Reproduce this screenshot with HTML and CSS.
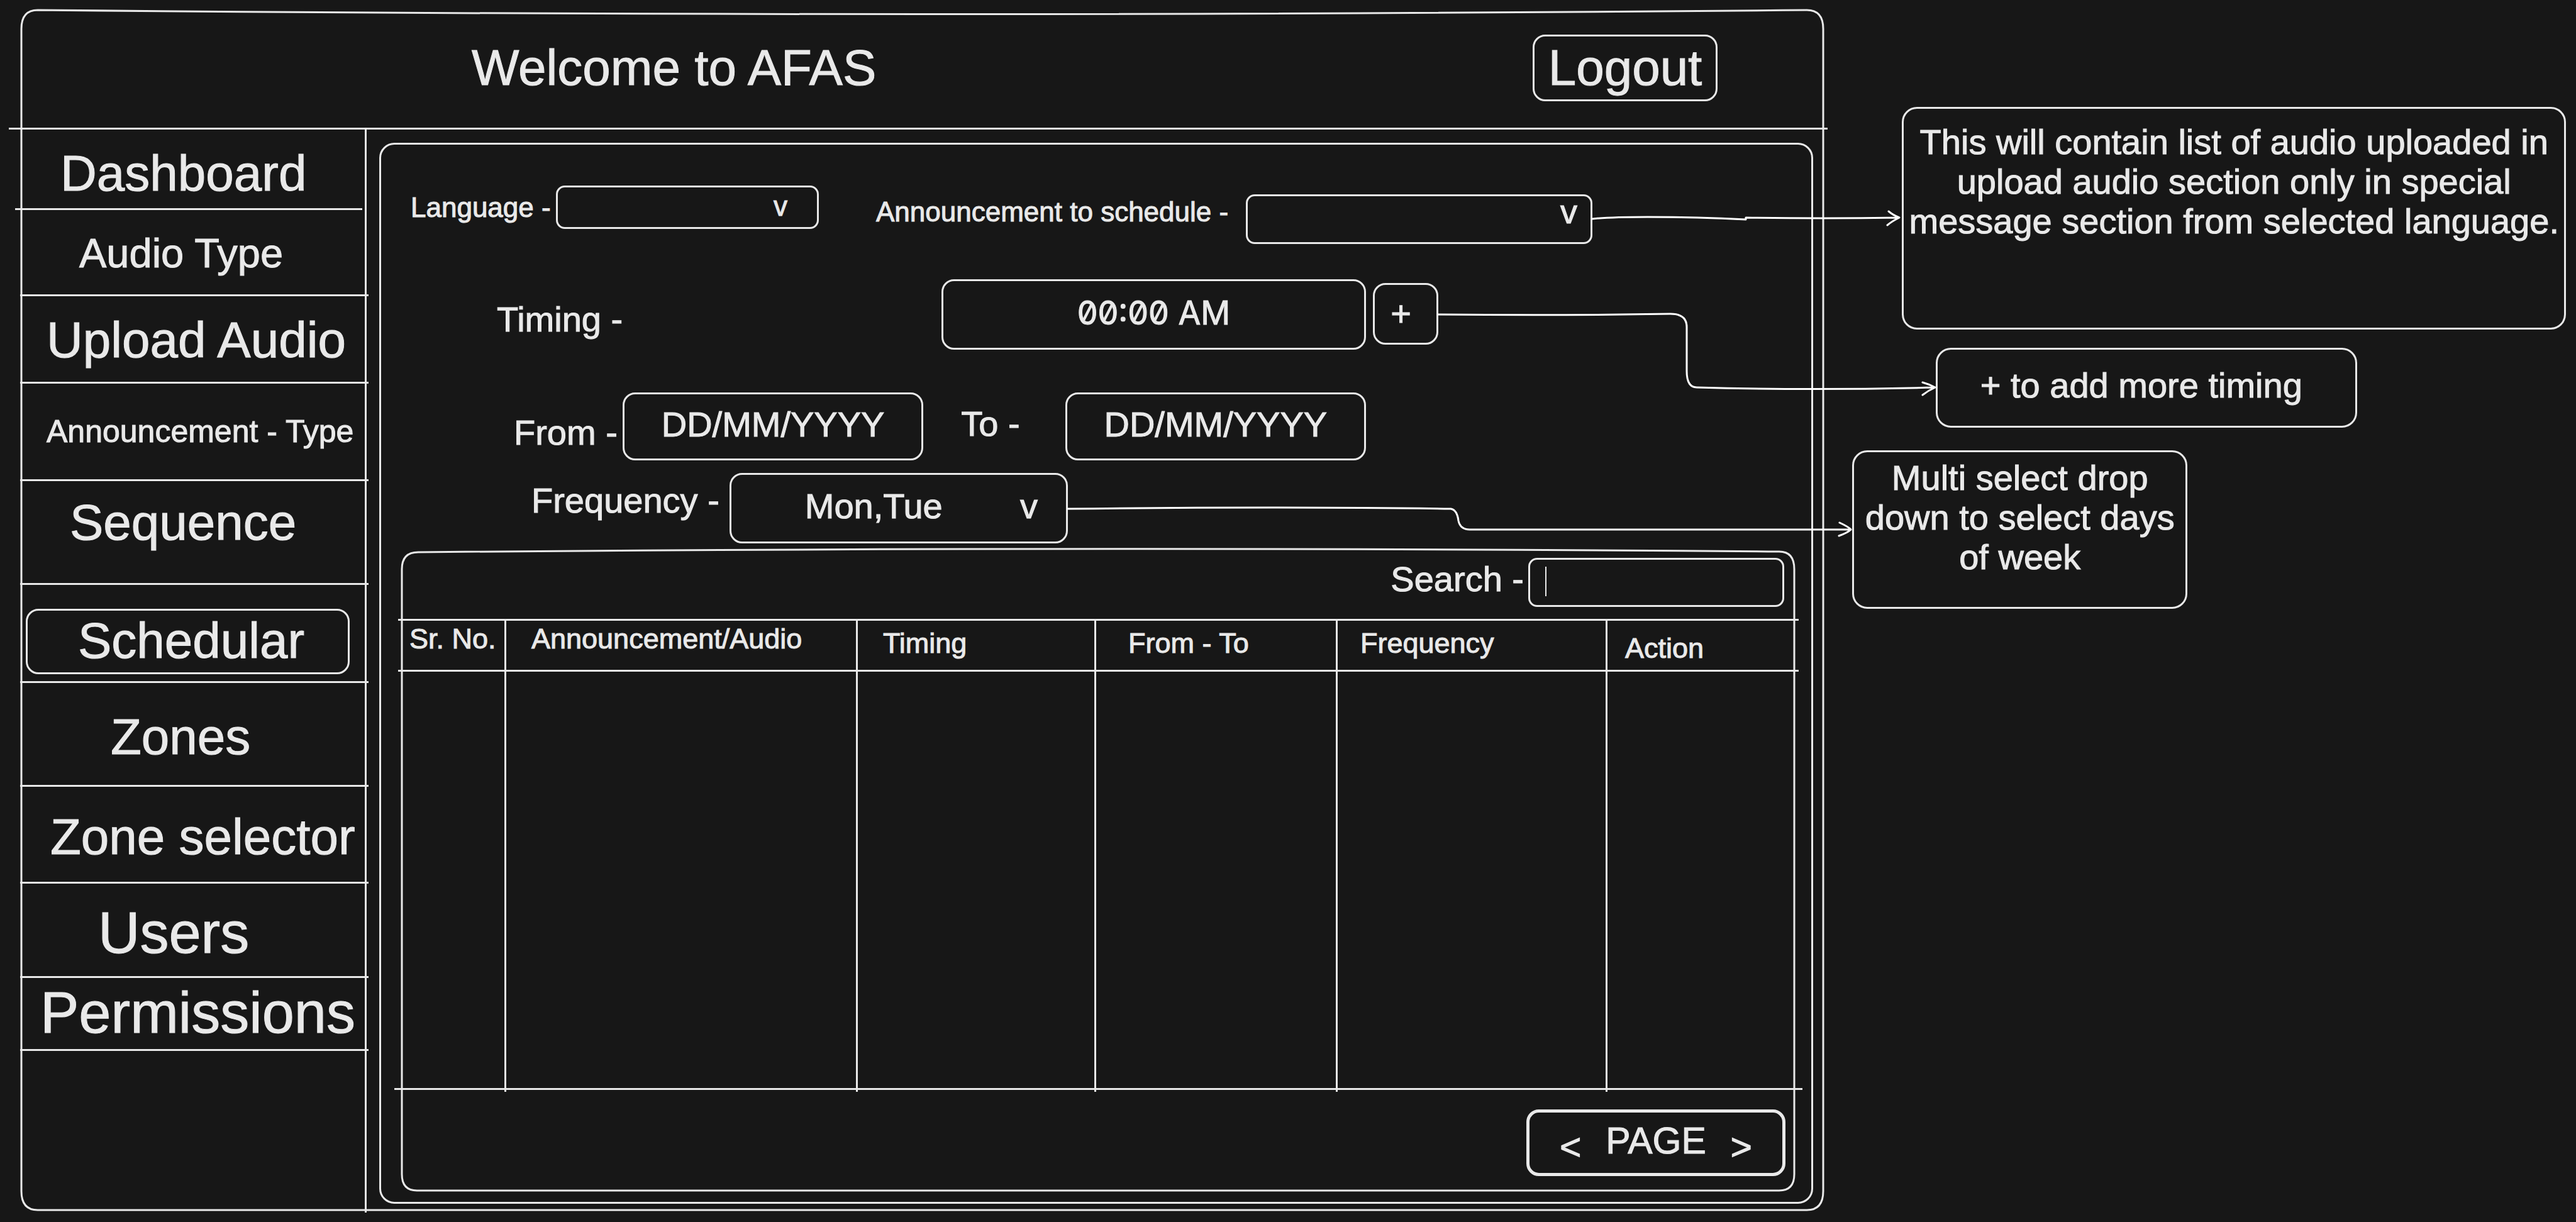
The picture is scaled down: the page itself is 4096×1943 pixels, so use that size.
FILE: index.html
```html
<!DOCTYPE html>
<html lang="en">
<head>
<meta charset="utf-8">
<meta name="viewport" content="width=device-width, initial-scale=1">
<title>AFAS - Schedular</title>
<link rel="stylesheet" href="styles.css">
</head>
<body>
<div class="board">
  <div class="app">
    <svg class="outline" viewBox="0 0 2869 1912" preserveAspectRatio="none" aria-hidden="true">
      <path d="M28 2 Q1434 15 2841 2 Q2867 2 2867 32 V1880 Q2867 1910 2841 1910 H28 Q2 1910 2 1880 V32 Q2 2 28 2 Z"/>
    </svg>
    <header class="topbar">
      <h1 class="title">Welcome to AFAS</h1>
      <button class="logout" type="button">Logout</button>
    </header>
    <div class="body">
      <nav class="sidebar" aria-label="Sections">
        <ul class="menu">
          <li class="item dashboard"><a href="#dashboard">Dashboard</a></li>
          <li class="item audio-type"><a href="#audio-type">Audio Type</a></li>
          <li class="item upload"><a href="#upload">Upload Audio</a></li>
          <li class="item announcement"><a href="#announcement">Announcement - Type</a></li>
          <li class="item sequence"><a href="#sequence">Sequence</a></li>
          <li class="item schedular"><a href="#schedular" aria-current="page">Schedular</a></li>
          <li class="item zones"><a href="#zones">Zones</a></li>
          <li class="item zone-selector"><a href="#zone-selector">Zone selector</a></li>
          <li class="item users"><a href="#users">Users</a></li>
          <li class="item permissions"><a href="#permissions">Permissions</a></li>
        </ul>
      </nav>
      <main class="panel">
        <form class="form">
          <div class="row row-source">
            <div class="field">
              <label class="small" for="language">Language -</label>
              <div class="select select-language"><select id="language"><option></option></select><span class="chevron" aria-hidden="true">v</span></div>
            </div>
            <div class="field field-announcement">
              <label class="small" for="audio">Announcement to schedule -</label>
              <div class="select select-audio"><select id="audio"><option></option></select><span class="chevron" aria-hidden="true">v</span></div>
            </div>
          </div>
          <div class="row row-timing">
            <label class="low" for="time">Timing -</label>
            <input class="box time" id="time" type="text" value="00:00 AM">
            <button class="box add" type="button" aria-label="Add timing">+</button>
          </div>
          <div class="row row-dates">
            <label class="low" for="from">From -</label>
            <input class="box date" id="from" type="text" placeholder="DD/MM/YYYY">
            <label class="to" for="to">To -</label>
            <input class="box date" id="to" type="text" placeholder="DD/MM/YYYY">
          </div>
          <div class="row row-frequency">
            <label class="high" for="frequency">Frequency -</label>
            <div class="select select-frequency"><select id="frequency"><option>Mon,Tue</option></select><span class="chevron" aria-hidden="true">v</span></div>
          </div>
        </form>
        <section class="records">
          <svg class="outline" viewBox="0 0 2218 1024" preserveAspectRatio="none" aria-hidden="true">
            <path d="M28 7 Q1109 -3 2192 6 Q2216 6 2216 34 V996 Q2216 1022 2192 1022 H26 Q2 1022 2 996 V34 Q2 7 28 7 Z"/>
          </svg>
          <div class="search">
            <label for="search">Search -</label>
            <div class="search-box"><span class="caret"></span><input id="search" type="text"></div>
          </div>
          <table class="table">
            <colgroup><col class="c-no"><col class="c-name"><col class="c-timing"><col class="c-range"><col class="c-frequency"><col class="c-action"></colgroup>
            <thead>
              <tr><th class="h-no">Sr. No.</th><th class="h-name">Announcement/Audio</th><th class="h-timing">Timing</th><th class="h-range">From - To</th><th class="h-frequency">Frequency</th><th class="h-action">Action</th></tr>
            </thead>
            <tbody>
              <tr><td></td><td></td><td></td><td></td><td></td><td></td></tr>
            </tbody>
          </table>
          <footer class="table-foot">
            <div class="pager">
              <button type="button" aria-label="Previous page">&lt;</button>
              <span>PAGE</span>
              <button type="button" aria-label="Next page">&gt;</button>
            </div>
          </footer>
        </section>
      </main>
    </div>
  </div>
  <aside class="notes">
    <p class="note note-audio">This will contain list of audio uploaded in<br>upload audio section only in special<br>message section from selected language.</p>
    <p class="note note-timing">+ to add more timing</p>
    <p class="note note-days">Multi select drop<br>down to select days<br>of week</p>
  </aside>
  <svg class="connectors" viewBox="0 0 4096 1943" aria-hidden="true">
    <path d="M2532 348 Q2560 345 2620 345 Q2700 345 2776 349 V346 Q2900 348 3020 346 M3003 336 Q3010 342 3020 346 Q3008 352 3001 358"/>
    <path d="M2287 500 Q2480 502 2656 499 Q2682 499 2682 520 V590 Q2682 616 2698 616 Q2880 621 3077 616 M3057 608 Q3068 611 3077 616 Q3066 621 3057 628"/>
    <path d="M1698 809 Q2040 805 2307 809 Q2317 811 2319 828 Q2322 842 2337 842 H2943 M2925 831 Q2940 838 2943 842 Q2938 847 2924 852"/>
  </svg>
</div>
</body>
</html>
```
FILE: styles.css
```css
:root {
  --ink: #e9e9e9;
  --paper: #171717;
  --line: 3px solid var(--ink);
}

* { box-sizing: border-box; }

body {
  margin: 0;
  background: var(--paper);
  color: var(--ink);
  font-family: "Liberation Sans", Arial, sans-serif;
  font-size: 56px;
  line-height: 64px;
  -webkit-text-stroke: 1px currentColor;
}

h1, p, ul { margin: 0; padding: 0; }

a { color: inherit; text-decoration: none; }

button, input, select {
  margin: 0;
  padding: 0;
  border: 0;
  background: transparent;
  color: inherit;
  font: inherit;
  -webkit-text-stroke: inherit;
  outline: 0;
  appearance: none;
  border-radius: 0;
  min-width: 0;
}

input::placeholder { color: inherit; opacity: 1; }

label { white-space: nowrap; }

.board {
  position: relative;
  display: grid;
  grid-template-columns: minmax(0, 2869fr) minmax(0, 1135fr);
  column-gap: 44px;
  align-items: start;
  padding: 14px 16px 16px 32px;
}

.outline {
  position: absolute;
  inset: 0;
  width: 100%;
  height: 100%;
  pointer-events: none;
}

.outline path {
  fill: none;
  stroke: var(--ink);
  stroke-width: 3px;
  vector-effect: non-scaling-stroke;
}

.connectors {
  position: absolute;
  top: 0;
  left: 0;
  width: 100%;
  pointer-events: none;
}

.connectors path {
  fill: none;
  stroke: #fff;
  stroke-width: 3px;
  stroke-linecap: round;
  stroke-linejoin: round;
}

.app { position: relative; }

/* Header */
.topbar {
  display: flex;
  align-items: center;
  justify-content: space-between;
  height: 192px;
  margin: 0 -5px 0 -18px;
  padding: 0 175px 2px 736px;
  border-bottom: var(--line);
}

.title {
  font-size: 80px;
  font-weight: 400;
  line-height: 80px;
}

.logout {
  width: 294px;
  height: 106px;
  border: var(--line);
  border-radius: 20px;
  font-size: 80px;
  line-height: 80px;
}

.body {
  display: grid;
  grid-template-columns: 551px minmax(0, 1fr);
}

/* Sidebar */
.sidebar {
  margin-bottom: -2px;
  border-right: var(--line);
}

.menu { list-style: none; }

.item {
  margin-right: -6px;
  border-bottom: var(--line);
  font-size: 80px;
  line-height: 80px;
  white-space: nowrap;
}

.item a { display: block; }

.dashboard { height: 128px; margin: 0 4px 0 -8px; padding: 30px 0 0 72px; }
.audio-type { height: 137px; padding: 29px 0 0 94px; font-size: 65px; }
.upload { height: 139px; padding: 30px 0 0 42px; }
.announcement { height: 155px; padding: 36px 0 0 42px; font-size: 50px; }
.sequence { height: 165px; padding: 26px 0 0 79px; }
.schedular { height: 156px; padding: 38px 30px 0 9px; }
.zones { height: 165px; padding: 46px 0 0 144px; }
.zone-selector { height: 154px; padding: 40px 0 0 48px; }
.users { height: 150px; padding: 38px 0 0 124px; font-size: 92px; }
.permissions { height: 116px; padding: 15px 0 0 32px; font-size: 92px; }

.schedular a {
  height: 104px;
  padding: 8px 0 0 80px;
  border: var(--line);
  border-radius: 20px;
}

/* Content panel */
.panel {
  margin: 21px 18px 12px 20px;
  border: var(--line);
  border-radius: 24px;
}

.form { padding-top: 65px; }

.row {
  display: flex;
  align-items: flex-start;
}

.row-source {
  display: grid;
  grid-template-columns: minmax(0, 649fr) minmax(0, 1139fr);
  column-gap: 91px;
  padding: 0 348px 0 47px;
}

.row-timing { margin-top: 56px; padding: 0 593px 0 184px; }
.row-dates { margin-top: 68px; padding: 0 708px 0 211px; }
.row-frequency { margin-top: 20px; padding: 0 1182px 0 239px; }

.field {
  display: flex;
  align-items: center;
  gap: 8px;
}

.field-announcement {
  align-items: flex-start;
  gap: 28px;
  margin-top: 14px;
}

.small { font-size: 44px; line-height: 56px; }
.low { padding-top: 32px; }
.high { padding-top: 12px; }

.box {
  border: var(--line);
  border-radius: 20px;
  text-align: center;
}

.select {
  display: flex;
  flex: 1;
  border: var(--line);
  border-radius: 14px;
}

.select select { flex: 1; height: 100%; }

.select-language { height: 69px; padding-right: 47px; font-size: 44px; line-height: 60px; }
.select-audio { height: 79px; padding-right: 21px; font-size: 54px; line-height: 48px; }

.select-frequency {
  height: 112px;
  margin-left: 16px;
  padding: 0 45px 8px 117px;
  border-radius: 20px;
  line-height: 100px;
}

.time {
  flex: 1;
  height: 112px;
  padding-bottom: 6px;
  font-family: Inter, sans-serif;
  font-size: 52px;
  font-feature-settings: "zero";
}

.row-timing .low { flex: 0 0 707px; }

.add { width: 104px; height: 98px; margin: 6px 0 0 11px; padding-right: 15px; }

.date { flex: 1; height: 108px; padding-bottom: 8px; }
.row-dates .low { margin-right: 8px; }
.to { margin: 0 72px 0 60px; padding-top: 18px; }

/* Records */
.records {
  position: relative;
  margin: 7px 25px 16px 31px;
}

.search {
  display: flex;
  justify-content: flex-end;
  gap: 7px;
  height: 113px;
  padding: 16px 18px 0 0;
  line-height: 68px;
}

.search-box {
  display: flex;
  align-items: center;
  width: 407px;
  height: 78px;
  padding: 0 12px 4px 24px;
  border: var(--line);
  border-radius: 14px;
}

.search-box input { flex: 1; }

.caret { width: 2px; height: 47px; background: var(--ink); }

.table {
  width: calc(100% + 9px);
  margin: 0 -5px 0 -4px;
  border-spacing: 0;
  table-layout: fixed;
}

.c-no { width: 172px; }
.c-name { width: 559px; }
.c-timing { width: 379px; }
.c-range { width: 384px; }
.c-frequency { width: 429px; }
.c-action { width: 304px; }

.table th {
  height: 84px;
  padding: 12px 0 0 40px;
  border: var(--line);
  border-left: 0;
  font-size: 45px;
  font-weight: 400;
  line-height: 48px;
  text-align: left;
  vertical-align: top;
  white-space: nowrap;
}

.table .h-no { padding: 5px 0 0 18px; }
.table .h-name { padding-top: 5px; }
.table .h-range { padding-left: 51px; }
.table .h-frequency { padding-left: 36px; }
.table .h-action { padding: 20px 0 0 28px; }

.table td {
  height: 668px;
  padding: 0;
  border-right: var(--line);
}

.table th:last-child, .table td:last-child { border-right: 0; }

.table-foot {
  display: flex;
  justify-content: flex-end;
  margin: -6px -11px 0 -10px;
  padding: 31px 27px 25px 0;
  border-top: var(--line);
}

.pager {
  display: flex;
  justify-content: space-between;
  width: 412px;
  height: 106px;
  padding: 13px 48px 0 48px;
  border: 5px solid var(--ink);
  border-radius: 20px;
  font-size: 59px;
}

/* Notes */
.notes {
  display: flex;
  flex-direction: column;
  padding-top: 156px;
}

.note {
  border: var(--line);
  border-radius: 24px;
  line-height: 63px;
  text-align: center;
  white-space: nowrap;
}

.note-audio { align-self: flex-end; width: 93%; min-height: 354px; padding-top: 21px; }
.note-timing { width: 59%; min-height: 127px; margin: 29px 0 0 133px; padding: 25px 16px 0 0; }
.note-days { width: 47%; min-height: 252px; margin-top: 36px; padding-top: 9px; }
```
